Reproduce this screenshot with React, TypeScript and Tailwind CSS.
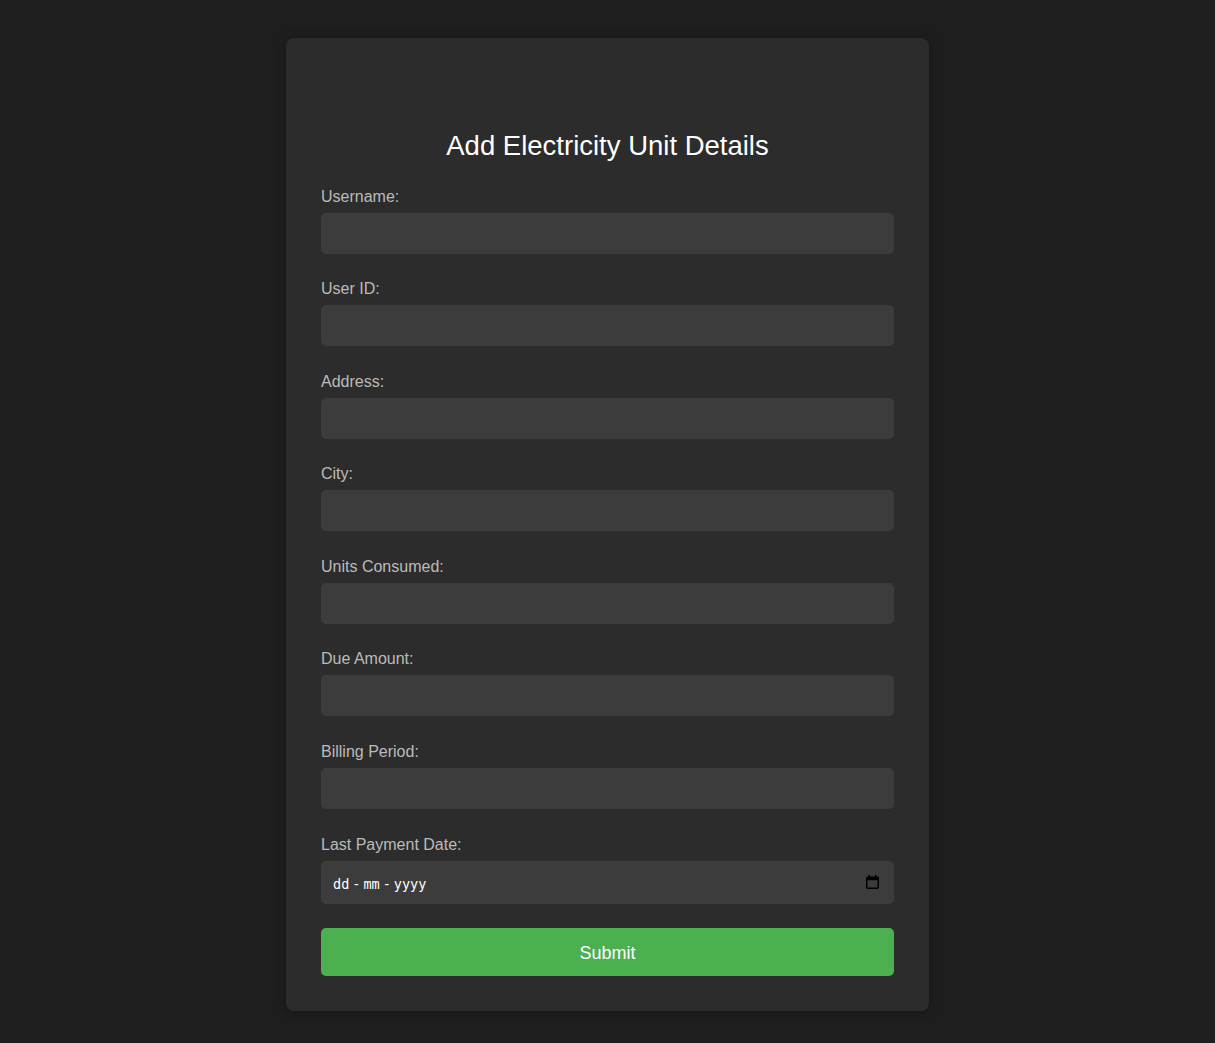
import React from 'react';

const fields = [
  'Username:',
  'User ID:',
  'Address:',
  'City:',
  'Units Consumed:',
  'Due Amount:',
  'Billing Period:',
];

function CalendarIcon() {
  return (
    <svg width="13" height="14" viewBox="0 0 13 14" className="shrink-0">
      <rect x="0.75" y="2.25" width="11.5" height="11" rx="1" fill="none" stroke="#000" strokeWidth="1.5" />
      <rect x="0.75" y="2.25" width="11.5" height="3" fill="#000" />
      <rect x="2.5" y="0" width="1.5" height="3" fill="#000" />
      <rect x="9" y="0" width="1.5" height="3" fill="#000" />
    </svg>
  );
}

export default function App() {
  return (
    <div className="min-h-screen bg-[#1e1e1e] pt-[38px] pb-[32px] font-['Liberation_Sans',Arial,sans-serif]">
      <div className="mx-auto w-[643px] rounded-lg bg-[#2c2c2c] px-[35px] pt-[35px] pb-[34.5px] shadow-[0_0_10px_rgba(0,0,0,0.3)]">
        <h2 className="mt-[57px] mb-[25.5px] text-center text-[27.5px] leading-[31px] text-white">
          Add Electricity Unit Details
        </h2>
        <form onSubmit={(e) => e.preventDefault()} className="flex flex-col">
          {fields.map((label) => (
            <div key={label} className="mb-[25.6px] flex flex-col">
              <label className="mb-[6px] text-[16px] leading-[20px] text-[#bbbbbb]">{label}</label>
              <input
                type="text"
                className="h-[41px] w-full rounded-[5px] bg-[#3c3c3c] px-[10px] text-[16px] text-white outline-none"
              />
            </div>
          ))}
          <div className="mb-[24px] flex flex-col">
            <label className="mb-[6px] text-[16px] leading-[20px] text-[#bbbbbb]">Last Payment Date:</label>
            <div className="flex h-[43px] w-full items-center justify-between rounded-[5px] bg-[#3c3c3c] pl-[12px] pr-[15px]">
              <span className="flex items-center pt-[3px] font-['DejaVu_Sans_Mono',monospace] text-[13.5px] text-white">
                <span>dd</span>
                <span className="mx-[3px]">-</span>
                <span>mm</span>
                <span className="mx-[3px]">-</span>
                <span>yyyy</span>
              </span>
              <CalendarIcon />
            </div>
          </div>
          <button
            type="submit"
            className="h-[48.5px] w-full rounded-[5px] bg-[#4caf50] pt-[3px] text-[18px] text-white"
          >
            Submit
          </button>
        </form>
      </div>
    </div>
  );
}
